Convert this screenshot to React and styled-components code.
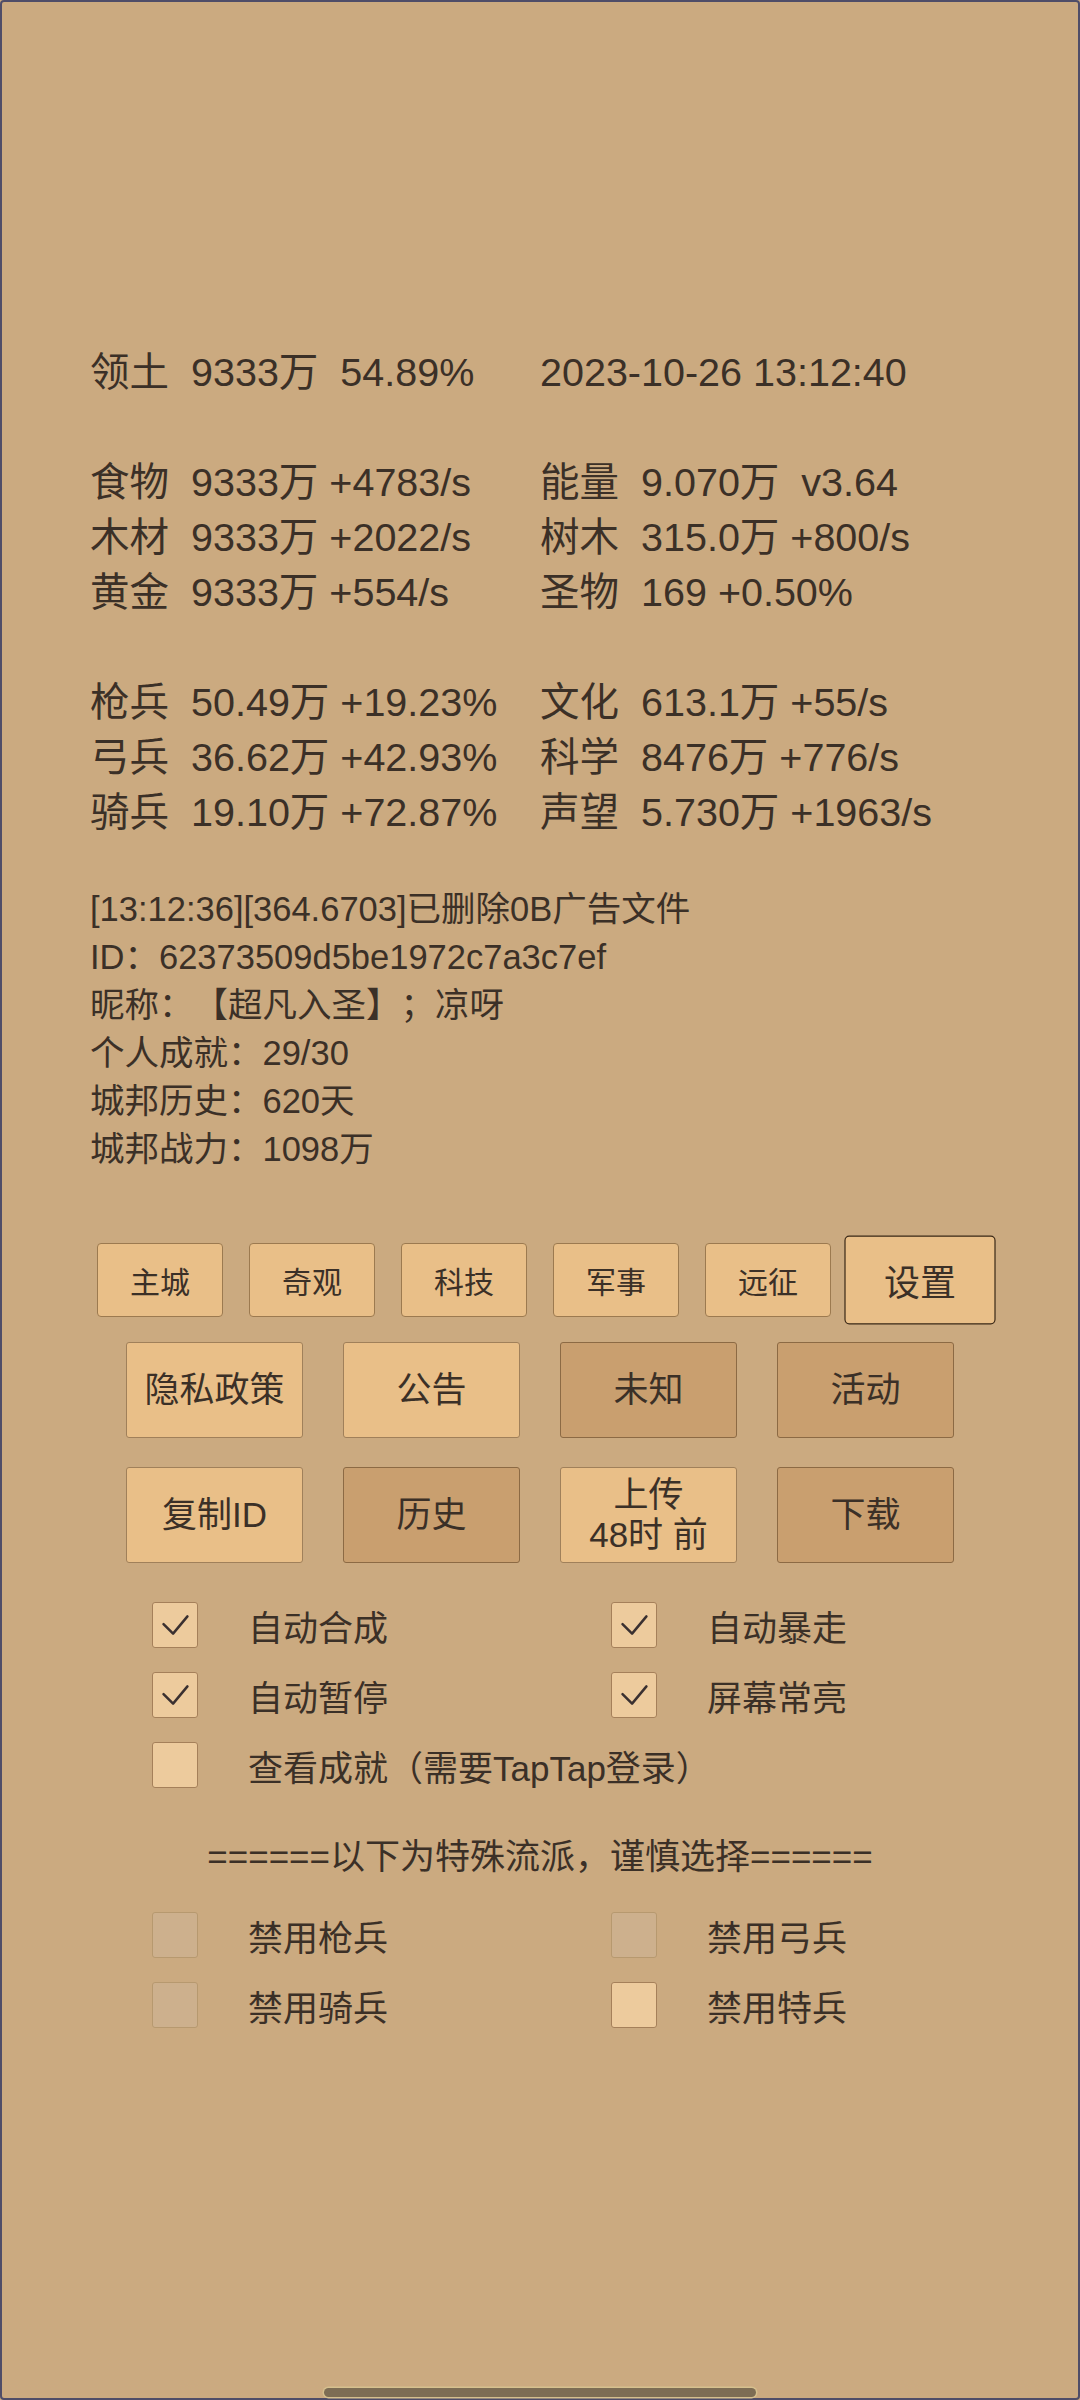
import React from "react";
import styled, { createGlobalStyle } from "styled-components";

const FONT = `"Liberation Sans", "Noto Sans CJK SC", sans-serif`;

const Global = createGlobalStyle`
  html, body { margin: 0; padding: 0; background: #CBAA80; }
  body { font-family: ${FONT}; color: #3b3027; text-spacing-trim: space-all; }
  * { box-sizing: border-box; }
`;

const Screen = styled.div`
  width: 1080px;
  height: 2400px;
  border: 2px solid #4f4d68;
  border-radius: 4px;
  background: #CBAA80;
  display: flex;
  flex-direction: column;
  font-family: ${FONT};
  color: #3b3027;
  text-spacing-trim: space-all;
`;

const Stats = styled.div`
  margin-top: 343px;
  padding-left: 88px;
  display: grid;
  grid-template-columns: 450px 1fr;
  grid-auto-rows: 55px;
  font-size: 39.5px;
  line-height: 55px;
`;

const StatCell = styled.div`
  display: flex;
  white-space: pre;
`;

const StatLabel = styled.span`
  width: 101px;
  flex: none;
`;

const Spacer = styled.div`
  grid-column: 1 / -1;
`;

const Log = styled.div`
  margin-top: 45px;
  padding-left: 88px;
  font-size: 34.5px;
  line-height: 48px;
  white-space: pre;
`;

const TabRow = styled.div`
  margin-top: 70px;
  display: flex;
  justify-content: center;
`;

const TabSlot = styled.div`
  width: 152px;
  display: flex;
  justify-content: center;
`;

const TabButton = styled.div`
  width: 126px;
  height: 74px;
  display: flex;
  align-items: center;
  justify-content: center;
  font-size: 30px;
  background: #E9BF88;
  border: 1.5px solid ${(p) => (p.$selected ? "#3a2816" : "#9c7a50")};
  border-radius: 4px;
  transform: ${(p) => (p.$selected ? "scale(1.2)" : "none")};
`;

const ActionRow = styled.div`
  margin-top: ${(p) => p.$gap}px;
  display: flex;
  justify-content: center;
  gap: 40px;
`;

const ActionButton = styled.div`
  width: 177px;
  height: 96px;
  display: flex;
  flex-direction: column;
  align-items: center;
  justify-content: center;
  font-size: 35px;
  line-height: 40px;
  text-align: center;
  background: ${(p) => (p.$dark ? "#C99F6F" : "#E9BF88")};
  border: 1.5px solid ${(p) => (p.$dark ? "#8c6a44" : "#a0805a")};
  border-radius: 3px;
`;

const Options = styled.div`
  margin-top: ${(p) => p.$gap}px;
  padding-left: 150px;
  display: grid;
  grid-template-columns: 459px 1fr;
  row-gap: 24px;
`;

const Option = styled.div`
  display: flex;
  align-items: center;
  gap: 50px;
  height: 46px;
  font-size: 35px;
  white-space: nowrap;
  grid-column: ${(p) => (p.$wide ? "1 / -1" : "auto")};
`;

const Box = styled.div`
  width: 46px;
  height: 46px;
  flex: none;
  border-radius: 3px;
  display: flex;
  align-items: center;
  justify-content: center;
  background: ${(p) => (p.$muted ? "#CDB08D" : "#EDCB9D")};
  border: 1.5px solid ${(p) => (p.$muted ? "#b7996f" : "#a5805a")};
`;

const Separator = styled.div`
  margin-top: 46px;
  text-align: center;
  font-size: 35px;
  line-height: 46px;
  white-space: pre;
`;

const NavArea = styled.div`
  margin-top: auto;
  padding-bottom: 1px;
  display: flex;
  justify-content: center;
`;

const NavPill = styled.div`
  width: 432px;
  height: 9px;
  border-radius: 5px;
  background: #7d6d54;
  box-shadow: 0 0 0 1.5px #d6c08e;
`;

const Check = () => (
  <svg width="46" height="46" viewBox="0 0 46 46">
    <polyline
      points="11,22 21,32 36,14"
      fill="none"
      stroke="#3a3030"
      strokeWidth="2.6"
      strokeLinecap="round"
      strokeLinejoin="round"
    />
  </svg>
);

const stats = [
  [["领土", "9333万  54.89%"], [null, "2023-10-26 13:12:40"]],
  null,
  [["食物", "9333万 +4783/s"], ["能量", "9.070万  v3.64"]],
  [["木材", "9333万 +2022/s"], ["树木", "315.0万 +800/s"]],
  [["黄金", "9333万 +554/s"], ["圣物", "169 +0.50%"]],
  null,
  [["枪兵", "50.49万 +19.23%"], ["文化", "613.1万 +55/s"]],
  [["弓兵", "36.62万 +42.93%"], ["科学", "8476万 +776/s"]],
  [["骑兵", "19.10万 +72.87%"], ["声望", "5.730万 +1963/s"]],
];

const logLines = [
  "[13:12:36][364.6703]已删除0B广告文件",
  "ID：62373509d5be1972c7a3c7ef",
  "昵称：【超凡入圣】；凉呀",
  "个人成就：29/30",
  "城邦历史：620天",
  "城邦战力：1098万",
];

const tabs = ["主城", "奇观", "科技", "军事", "远征", "设置"];

const row2 = [
  { t: "隐私政策" },
  { t: "公告" },
  { t: "未知", dark: true },
  { t: "活动", dark: true },
];
const row3 = [
  { t: "复制ID" },
  { t: "历史", dark: true },
  { t: ["上传", "48时 前"] },
  { t: "下载", dark: true },
];

const opts = [
  { t: "自动合成", c: true },
  { t: "自动暴走", c: true },
  { t: "自动暂停", c: true },
  { t: "屏幕常亮", c: true },
  { t: "查看成就（需要TapTap登录）", c: false, wide: true },
];

const bans = [
  { t: "禁用枪兵", muted: true },
  { t: "禁用弓兵", muted: true },
  { t: "禁用骑兵", muted: true },
  { t: "禁用特兵", muted: false },
];

const Stat = ({ cell }) => (
  <StatCell>
    {cell[0] ? <StatLabel>{cell[0]}</StatLabel> : null}
    <span>{cell[1]}</span>
  </StatCell>
);

export default function App() {
  return (
    <>
      <Global />
      <Screen>
        <Stats>
          {stats.map((row, i) =>
            row ? (
              <React.Fragment key={i}>
                <Stat cell={row[0]} />
                <Stat cell={row[1]} />
              </React.Fragment>
            ) : (
              <Spacer key={i} />
            )
          )}
        </Stats>

        <Log>
          {logLines.map((l) => (
            <div key={l}>{l}</div>
          ))}
        </Log>

        <TabRow>
          {tabs.map((t, i) => (
            <TabSlot key={t}>
              <TabButton $selected={i === tabs.length - 1}>{t}</TabButton>
            </TabSlot>
          ))}
        </TabRow>

        <ActionRow $gap={25}>
          {row2.map((b) => (
            <ActionButton key={b.t} $dark={b.dark}>
              {b.t}
            </ActionButton>
          ))}
        </ActionRow>
        <ActionRow $gap={29}>
          {row3.map((b, i) => (
            <ActionButton key={i} $dark={b.dark}>
              {Array.isArray(b.t) ? b.t.map((l) => <div key={l}>{l}</div>) : b.t}
            </ActionButton>
          ))}
        </ActionRow>

        <Options $gap={39}>
          {opts.map((o) => (
            <Option key={o.t} $wide={o.wide}>
              <Box>{o.c ? <Check /> : null}</Box>
              <span>{o.t}</span>
            </Option>
          ))}
        </Options>

        <Separator>{"======以下为特殊流派，谨慎选择======"}</Separator>

        <Options $gap={32}>
          {bans.map((o) => (
            <Option key={o.t}>
              <Box $muted={o.muted} />
              <span>{o.t}</span>
            </Option>
          ))}
        </Options>

        <NavArea>
          <NavPill />
        </NavArea>
      </Screen>
    </>
  );
}
